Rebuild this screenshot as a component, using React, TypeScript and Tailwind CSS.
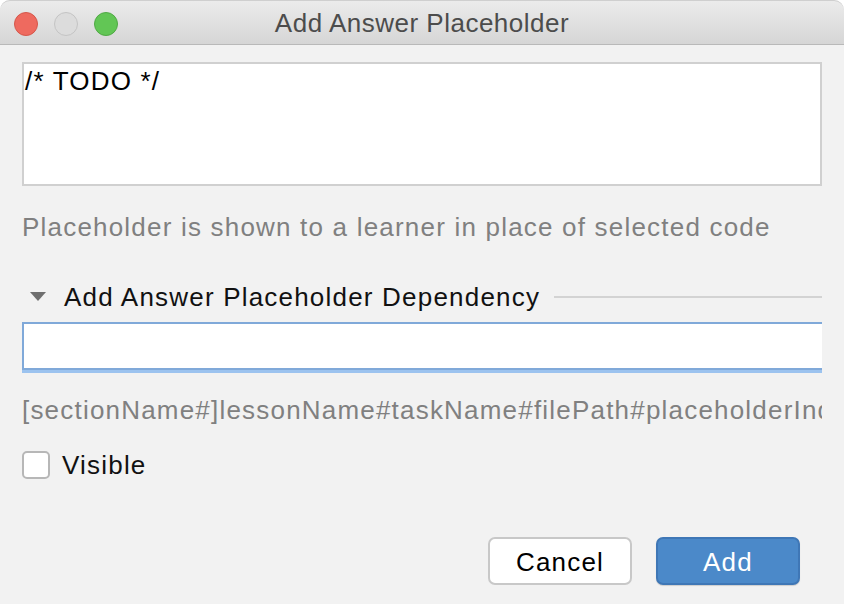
import React from "react";

const font = { fontFamily: '"Liberation Sans", Arial, sans-serif' };

function TitleBar() {
    return (
        <div className="relative flex items-center justify-center h-[45px] rounded-t-[10px] border-t border-[#cfcfcf] border-b border-b-[#b9b9b9] bg-gradient-to-b from-[#ebebeb] to-[#d6d6d6]">
            {/* traffic lights */}
            <div className="absolute left-[14px] top-[11px] flex gap-[16px]">
                <div className="w-[24px] h-[24px] rounded-full bg-[#ee6a5f] border border-[#d5574b]" />
                <div className="w-[24px] h-[24px] rounded-full bg-[#dcdcdc] border border-[#c4c4c4]" />
                <div className="w-[24px] h-[24px] rounded-full bg-[#62c655] border border-[#50a945]" />
            </div>
            <span className="text-[26px] tracking-[0.5px] text-[#4c4c4c] leading-none">Add Answer Placeholder</span>
        </div>
    );
}

export default function App() {
    return (
        <div className="w-[844px] h-[604px] bg-white overflow-hidden" style={font}>
            <div className="h-full bg-[#f2f2f2] rounded-t-[10px] flex flex-col">
                <TitleBar />
                <div className="flex flex-col px-[22px] text-[26px] tracking-[1.2px]">
                    {/* code area */}
                    <div className="mt-[17px] h-[124px] bg-white border-2 border-[#d0d0d0] px-[1px] pt-[2px] text-black leading-[30px]">
                        /* TODO */
                    </div>
                    <div className="mt-[25px] text-[#808080] leading-[32px] whitespace-nowrap">
                        Placeholder is shown to a learner in place of selected code
                    </div>

                    {/* dependency section */}
                    <div className="mt-[38px] flex items-center h-[32px]">
                        <svg width="16" height="10" viewBox="0 0 16 10" className="ml-[8px] mr-[18px]">
                            <polygon points="0,0 16,0 8,9" fill="#6f6f6f" />
                        </svg>
                        <span className="text-[#111] leading-none whitespace-nowrap">Add Answer Placeholder Dependency</span>
                        <div className="flex-1 ml-[14px] h-[2px] bg-[#d3d3d3]" />
                    </div>
                    <div className="mt-[9px] h-[48px] bg-white border-t-2 border-l-2 border-b-2 border-[#80a9d9] shadow-[0_3px_0_#9cc3ef]" />
                    <div className="mt-[24px] text-[#808080] leading-[32px] whitespace-nowrap overflow-hidden">
                        [sectionName#]lessonName#taskName#filePath#placeholderIndex
                    </div>

                    <label className="mt-[25px] flex items-center gap-[12px]">
                        <div className="w-[28px] h-[28px] rounded-[5px] bg-white border-2 border-[#b7b7b7]" />
                        <span className="text-[#111] leading-none">Visible</span>
                    </label>

                    {/* buttons */}
                    <div className="mt-[58px] flex justify-end gap-[24px] pr-[22px]">
                        <button className="w-[144px] h-[48px] pt-[3px] rounded-[7px] bg-white border-2 border-[#c8c8c8] text-black">
                            Cancel
                        </button>
                        <button className="w-[144px] h-[48px] pt-[3px] rounded-[7px] bg-[#4b89c9] border-2 border-[#3f77b6] text-white shadow-[0_1px_1px_rgba(0,0,0,0.15)]">
                            Add
                        </button>
                    </div>
                </div>
            </div>
        </div>
    );
}
